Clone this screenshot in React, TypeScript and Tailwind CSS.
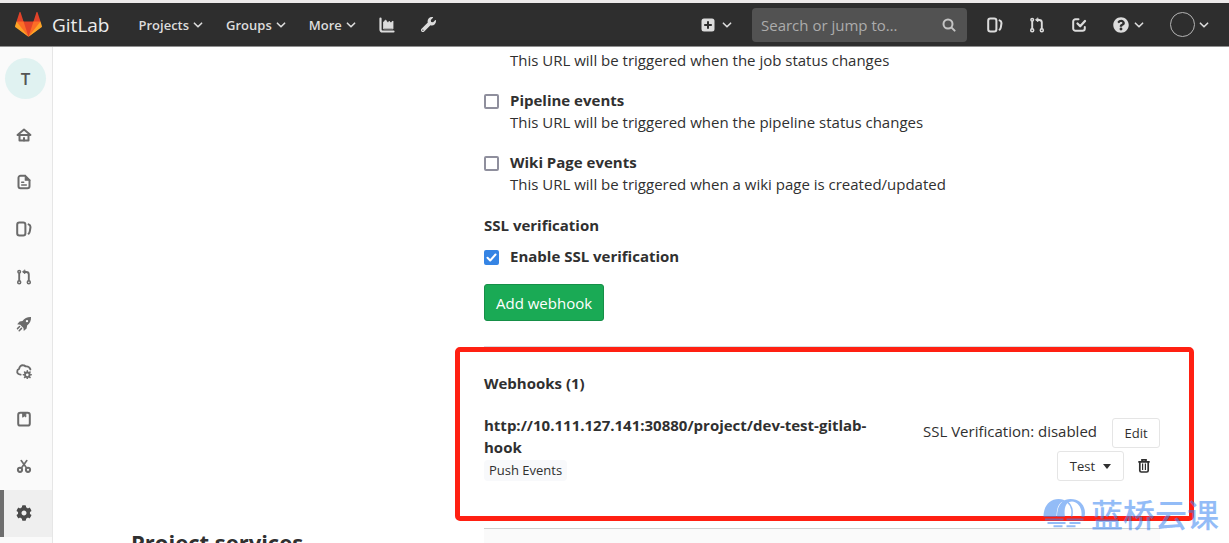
import type { ReactNode } from 'react';
import { FaWrench, FaQuestionCircle, FaCog } from 'react-icons/fa';

function Icon({ children, className = 'size-4' }: { children: ReactNode; className?: string }) {
  return (
    <svg
      viewBox="0 0 16 16"
      fill="none"
      stroke="currentColor"
      strokeWidth="2"
      strokeLinecap="round"
      strokeLinejoin="round"
      className={`${className} shrink-0`}
      aria-hidden="true"
    >
      {children}
    </svg>
  );
}

const Chevron = () => (
  <svg viewBox="0 0 10 6" className="h-[6px] w-[10px] shrink-0" fill="none" stroke="currentColor" strokeWidth="1.6" strokeLinecap="round" strokeLinejoin="round" aria-hidden="true">
    <path d="M1.4 1.2 5 4.8l3.600-3.600" />
  </svg>
);

const Chart = () => (
  <Icon>
    <path d="M1.500 1.500v11a2 2 0 0 0 2 2h11" strokeWidth="2.200" />
    <path d="M4.500 11.500V5l2.200-2 2 2.800 1.600-1.600 1.500 1.600L14 4v7.500z" fill="currentColor" strokeWidth="0.800" />
  </Icon>
);

const Issues = () => (
  <Icon>
    <rect x="1.200" y="1.500" width="8.200" height="13" rx="2.200" />
    <path d="M12.600 3.400c1.500.6 2.100 1.800 1.800 3.400l-.5 3c-.2 1.300-.6 2.300-1.300 2.900" />
  </Icon>
);

const MergeRequest = () => (
  <Icon>
    <circle cx="3.200" cy="13.200" r="1.500" strokeWidth="1.500" />
    <circle cx="12.800" cy="13.200" r="1.500" strokeWidth="1.500" />
    <circle cx="3.200" cy="2.800" r="1.300" strokeWidth="1.500" />
    <path d="M3.200 4.500v7M12.800 11.500V5.500c0-1.500-1-2.500-2.500-2.500H8" strokeWidth="1.900" />
    <path d="M9 1.200v3.600L6.700 3z" fill="currentColor" strokeWidth="0.800" />
  </Icon>
);

const Todo = () => (
  <Icon>
    <path d="M7.500 2.200H4.500A2.300 2.300 0 0 0 2.200 4.500v7a2.300 2.300 0 0 0 2.300 2.300h7a2.300 2.300 0 0 0 2.300-2.300V10" />
    <path d="m6.500 6.500 2.700 2.700L14 4" strokeWidth="2.300" />
  </Icon>
);

const Home = () => (
  <Icon>
    <path d="M1.500 8 8 2.600 14.500 8z" strokeWidth="1.900" />
    <path d="M3.500 8v5.500h9V8" strokeWidth="2" />
    <path d="M8 11v2.500" strokeWidth="2" />
  </Icon>
);

const Doc = () => (
  <Icon>
    <path d="M9 1.800H4.500a2 2 0 0 0-2 2v8.400a2 2 0 0 0 2 2h7a2 2 0 0 0 2-2V6.500" />
    <path d="M9.300 1.500v4.700h4.700z" fill="currentColor" strokeWidth="1.200" />
    <path d="M5.700 8.200h2M5.700 11h4.600" strokeWidth="1.500" />
  </Icon>
);

const Rocket = () => (
  <Icon>
    <path
      d="M15 1c-3.500-.2-6.500 1.200-8.500 4L3.600 5.400 1.200 8.200l3 .5 3.200 3.200.4 3 2.800-2.400.5-3C13.900 7.500 15.300 4.600 15 1zM11 6.300a1.200 1.200 0 1 1 0-2.400 1.200 1.200 0 0 1 0 2.400z"
      fill="currentColor"
      fillRule="evenodd"
      stroke="none"
    />
    <path d="M3.600 10.500 1.500 12.600M5.500 12.400 3.200 14.700" strokeWidth="1.500" />
  </Icon>
);

const CloudGear = () => (
  <Icon>
    <path d="M4.600 11.600C2.400 11.400 1 10.300 1.200 8.400c.1-1.300 1-2.200 1.900-2.500C3.400 3.600 5 2 7.200 2.300c1.200.1 1.700.6 2.500 1.100 1.900-.2 4 1 4.700 3" strokeWidth="1.900" />
    <circle cx="11.300" cy="11.800" r="2.300" strokeWidth="1.900" />
    <path d="M11.300 7.900v.5M11.300 15.200v.5M7.400 11.800h.5M14.700 11.800h.5M8.600 9.100l.3.300M13.700 14.200l.3.300M14 9.100l-.3.300M8.900 14.200l-.3.300" strokeWidth="1.600" />
  </Icon>
);

const Registry = () => (
  <Icon>
    <rect x="2.200" y="1.800" width="11.600" height="12.800" rx="2.200" />
    <path d="M7 2h2.800v4L8.400 5 7 6z" fill="currentColor" strokeWidth="1" />
  </Icon>
);

const Snippet = () => (
  <Icon>
    <circle cx="4" cy="11.800" r="2.100" strokeWidth="2" />
    <circle cx="12" cy="11.800" r="2.100" strokeWidth="2" />
    <path d="M5.400 10 10.800 2.600M10.600 10 5.200 2.600" strokeWidth="1.700" />
  </Icon>
);

const Trash = () => (
  <svg viewBox="0 0 12 14" className="h-[14px] w-3 shrink-0" fill="none" stroke="currentColor" aria-hidden="true">
    <path d="M4 2V.9h4V2M.3 2.800h11.400" strokeWidth="1.700" />
    <path d="M1.800 3v8.500c0 1 .5 1.500 1.500 1.500h5.400c1 0 1.500-.5 1.500-1.500V3" strokeWidth="1.700" />
    <path d="M4.600 4.500v6.500M7.400 4.500v6.500" strokeWidth="1.200" />
  </svg>
);

const Tanuki = () => (
  <svg viewBox="0 0 36 36" className="size-[27px] shrink-0" aria-hidden="true">
    <path fill="#e24329" d="M2 14l9.380 9v-9l-4-12.280c-.205-.632-1.176-.632-1.380 0z" />
    <path fill="#e24329" d="M34 14l-9.380 9v-9l4-12.280c.205-.632 1.176-.632 1.380 0z" />
    <path fill="#e24329" d="M18 34.380 3 14h30z" />
    <path fill="#fc6d26" d="M18 34.380 11.380 14H2l4 11z" />
    <path fill="#fc6d26" d="M18 34.380 24.620 14H34l-4 11z" />
    <path fill="#fca326" d="M2 14 .1 20.160c-.18.565 0 1.200.5 1.560l17.420 12.660z" />
    <path fill="#fca326" d="M34 14l1.900 6.160c.18.565 0 1.200-.5 1.560L18 34.380z" />
  </svg>
);

const sidebar: { label: string; icon: ReactNode; active?: boolean }[] = [
  { label: 'Project', icon: <Home /> },
  { label: 'Repository', icon: <Doc /> },
  { label: 'Issues', icon: <Issues /> },
  { label: 'Merge requests', icon: <MergeRequest /> },
  { label: 'CI / CD', icon: <Rocket /> },
  { label: 'Operations', icon: <CloudGear /> },
  { label: 'Registry', icon: <Registry /> },
  { label: 'Snippets', icon: <Snippet /> },
  { label: 'Settings', icon: <FaCog className="size-4" />, active: true },
];

function Header() {
  return (
    <header className="flex h-[47px] shrink-0 items-center border-t-[3px] border-b border-t-[#edeaea] border-b-[#8f8f8f] bg-[#2e2e2e] pr-5 pl-[15px] text-[#dcdcdc]">
      <a href="#home" className="flex items-center gap-[10px] text-[19px] leading-6 text-[#ececec]">
        <Tanuki />
        GitLab
      </a>
      <nav className="ml-[29px] flex items-center gap-[23px] text-[13px] font-semibold">
        {['Projects', 'Groups', 'More'].map((name) => (
          <button key={name} type="button" className="flex items-center gap-1">
            {name}
            <Chevron />
          </button>
        ))}
        <a href="#activity" aria-label="Activity"><Chart /></a>
        <a href="#admin" aria-label="Admin area" className="ml-[3px]"><FaWrench className="size-[15px]" /></a>
      </nav>
      <div className="ml-auto flex items-center">
        <button type="button" aria-label="New" className="flex items-center gap-[7px]">
          <svg viewBox="0 0 14 14" className="size-[14px]" aria-hidden="true">
            <rect x="0.500" y="0.500" width="13" height="13" rx="2.500" fill="currentColor" />
            <path d="M7 3.200v7.600M3.200 7h7.600" stroke="#2e2e2e" strokeWidth="2" />
          </svg>
          <Chevron />
        </button>
        <label className="ml-5 flex h-[34px] w-[215px] items-center rounded bg-[#525252] pr-[11px] pl-[9px]">
          <input
            type="text"
            aria-label="Search or jump to"
            placeholder="Search or jump to…"
            className="min-w-0 flex-1 bg-transparent text-[15px] outline-none placeholder:text-[#acacac]"
          />
          <svg viewBox="0 0 14 14" className="size-[14px] shrink-0 text-[#c4c4c4]" fill="none" stroke="currentColor" strokeWidth="2" strokeLinecap="round" aria-hidden="true">
            <circle cx="6" cy="6" r="4.500" />
            <path d="m9.600 9.600 3 3" />
          </svg>
        </label>
        <div className="ml-5 flex items-center gap-[26px]">
          <a href="#issues" aria-label="Issues"><Issues /></a>
          <a href="#merge-requests" aria-label="Merge requests"><MergeRequest /></a>
          <a href="#todos" aria-label="To-do list"><Todo /></a>
          <button type="button" aria-label="Help" className="flex items-center gap-[5px]">
            <FaQuestionCircle className="size-4" />
            <Chevron />
          </button>
          <button type="button" aria-label="User menu" className="flex items-center gap-1">
            <span className="size-[25px] rounded-full border border-[#b4b4b4]" />
            <Chevron />
          </button>
        </div>
      </div>
    </header>
  );
}

function Option({ id, label, text }: { id: string; label: string; text: string }) {
  return (
    <div className="mb-[18px] flex gap-[11px]">
      <input
        id={id}
        type="checkbox"
        className="mt-[5px] size-[15px] shrink-0 appearance-none rounded-[2px] border-2 border-[#8f8f9d] bg-white"
      />
      <div>
        <label htmlFor={id} className="block font-bold">{label}</label>
        <p>{text}</p>
      </div>
    </div>
  );
}

function Watermark() {
  return (
    <div className="pointer-events-none absolute right-[10px] bottom-[15px] flex items-center gap-[5px] text-[#3c86f2] opacity-55">
      <svg viewBox="0 0 42 30" className="h-[30px] w-[43px]" aria-hidden="true">
        <path d="M0 19C0 8 6 1 15 1c4 0 6 1 8 3-6-2-10 4-10 15z" fill="currentColor" />
        <path d="M13.500 19C13.500 8 18 1 27 1c9 0 14.500 6 14.500 14 0 1.500-.3 3-.7 4h-3c1.500-8-3-15.500-9.300-15.500-6 0-8.500 6.500-7 15.500z" fill="currentColor" />
        <g fill="none" stroke="currentColor">
          <path d="M24 4c4 3.500 5.500 9 4 15" strokeWidth="1.500" />
          <path d="M1.500 21.500H20M23 21.500h17M4 25h18M26 25h11M10 28.300h9M23 28.300h9" strokeWidth="2" />
        </g>
      </svg>
      <span className="font-['Noto_Sans_CJK_SC',sans-serif] text-[32px] leading-[30px] font-medium">蓝桥云课</span>
    </div>
  );
}

export default function App() {
  return (
    <div className="relative flex h-screen flex-col overflow-hidden bg-white font-['Open_Sans','Noto_Sans',sans-serif] text-[15px] leading-[22px] text-[#303030]">
      <Header />
      <div className="flex min-h-0 flex-1">
        <aside className="w-[53px] shrink-0 border-r border-[#e6e6e6] bg-[#fafafa] text-[#6b6b6b]">
          <a href="#project" className="mt-[11px] ml-[5px] flex size-[41px] items-center justify-center rounded-full bg-[#e0f2f1] text-[17px] font-semibold text-[#555]">
            T
          </a>
          <nav className="mt-3 grid h-[426px] auto-rows-fr">
            {sidebar.map(({ label, icon, active }) => (
              <a
                key={label}
                href={`#${label}`}
                aria-label={label}
                className={
                  active
                    ? 'flex items-center border-l-4 border-[#6e6e6e] bg-[#efefef] pl-3 text-[#4a4a4a]'
                    : 'flex items-center pl-4'
                }
              >
                {icon}
              </a>
            ))}
          </nav>
        </aside>

        <main className="min-w-0 flex-1 overflow-hidden pr-[69px] pl-[78px]">
          <section className="grid grid-cols-[353fr_676fr]">
            <div className="col-start-2">
              <p className="mt-[2px] mb-[18px] ml-[26px]">This URL will be triggered when the job status changes</p>
              <Option id="pipeline" label="Pipeline events" text="This URL will be triggered when the pipeline status changes" />
              <Option id="wiki" label="Wiki Page events" text="This URL will be triggered when a wiki page is created/updated" />
              <h5 className="pt-px font-bold">SSL verification</h5>
              <div className="mt-[9px] flex gap-[11px]">
                <span className="relative mt-[5px] size-[15px] shrink-0">
                  <input id="ssl" type="checkbox" defaultChecked className="peer block size-[15px] appearance-none rounded-[2px] border-2 border-[#8f8f9d] checked:border-[#3584e4] checked:bg-[#3584e4]" />
                  <svg viewBox="0 0 15 15" className="pointer-events-none absolute inset-0 hidden peer-checked:block" fill="none" stroke="#fff" strokeWidth="2" strokeLinecap="round" strokeLinejoin="round" aria-hidden="true">
                    <path d="m3.500 7.800 2.700 2.700 5.300-6" />
                  </svg>
                </span>
                <label htmlFor="ssl" className="font-bold">Enable SSL verification</label>
              </div>
              <button type="button" className="mt-[17px] block h-[37px] rounded-[3px] border border-[#168f48] bg-[#1aaa55] px-[11px] text-[15px] text-white">
                Add webhook
              </button>
              <hr className="mt-[25px] border-[#d9dde2]" />

              <div className="relative h-[181px] pt-[25px]">
                <div className="pointer-events-none absolute top-0 -right-[34px] -left-[29px] h-[174px] rounded-[5px] border-[5px] border-[#ff2012]" />
                <h5 className="font-bold">Webhooks (1)</h5>
                <div className="mt-5 flex justify-between">
                  <div className="w-[390px]">
                    <strong className="block font-bold">http://10.111.127.141:30880/project/dev-test-gitlab-hook</strong>
                    <span className="mt-[2px] inline-block rounded bg-[#f8f9fb] px-[5px] text-[13px] leading-[21px]">Push Events</span>
                  </div>
                  <div className="mt-1 flex flex-col gap-[3px]">
                    <div className="flex items-start justify-end gap-[15px]">
                      <span className="mt-[2px]">SSL Verification: disabled</span>
                      <button type="button" className="h-[30px] w-12 rounded-[3px] border border-[#e5e5e5] text-[13px]">Edit</button>
                    </div>
                    <div className="flex items-center justify-end gap-[14px] pr-[10px]">
                      <button type="button" className="flex h-[30px] w-[67px] items-center justify-center gap-2 rounded-[3px] border border-[#e5e5e5] text-[13px]">
                        Test
                        <svg viewBox="0 0 8 5" className="h-[5px] w-2" fill="currentColor" aria-hidden="true"><path d="M0 0h8L4 5z" /></svg>
                      </button>
                      <button type="button" aria-label="Delete webhook"><Trash /></button>
                    </div>
                  </div>
                </div>
              </div>
            </div>
          </section>
          <section className="grid grid-cols-[353fr_676fr]">
            <h4 className="text-[22px] leading-7 font-bold">Project services</h4>
            <div className="h-12 border-t border-[#cfd1d1] bg-[#fafafa]" />
          </section>
        </main>
      </div>
      <Watermark />
    </div>
  );
}
